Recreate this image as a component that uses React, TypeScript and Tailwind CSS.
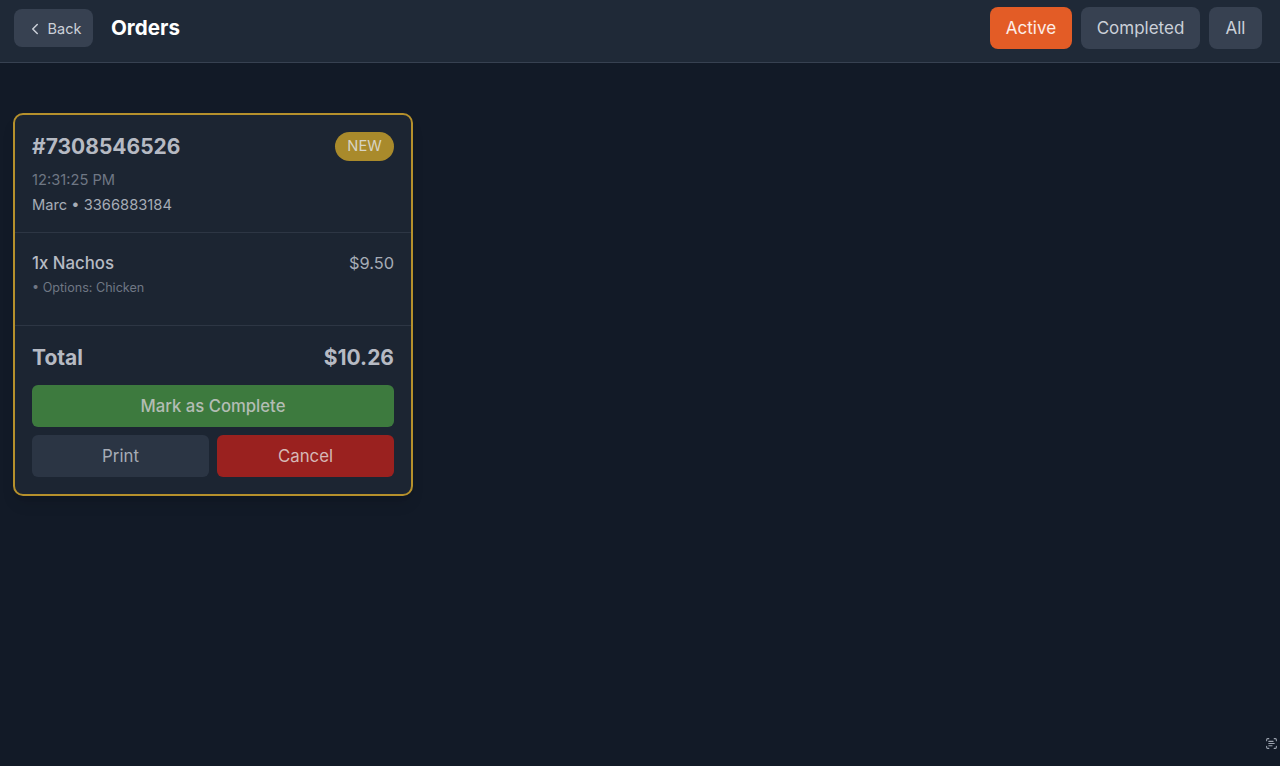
import { ChevronLeft, ScanText } from 'lucide-react'

const font = { fontFamily: 'Inter, "Liberation Sans", sans-serif' }

export default function App() {
  return (
    <div style={font} className="relative min-h-[766px] bg-[#121a27] antialiased">
      <header className="h-[63px] flex items-start justify-between pl-[14px] pr-[18px] pt-[7px] bg-[#1f2937] border-b border-[#374151]">
        <div className="flex items-center gap-[18px] h-[42px]">
          <button className="h-[38px] w-[79px] pt-px flex items-center justify-center gap-1 rounded-lg bg-[#374151] text-[#cbd0d8] text-[14.5px]">
            <ChevronLeft size={18} strokeWidth={2} />
            Back
          </button>
          <h1 className="pt-px text-[20.6px] font-bold text-white">Orders</h1>
        </div>
        <div className="flex items-center gap-[9px]">
          <button className="h-[42px] w-[82px] pt-px rounded-lg bg-[#e35c26] text-white/90 text-[17px]">Active</button>
          <button className="h-[42px] w-[119px] pt-px rounded-lg bg-[#374151] text-[#cbd0d8] text-[17px]">Completed</button>
          <button className="h-[42px] w-[53px] pt-px rounded-lg bg-[#374151] text-[#cbd0d8] text-[17px]">All</button>
        </div>
      </header>

      <main className="pt-[50px] px-[13px]">
        <div className="w-[400px] rounded-[10px] border-2 border-[#b5902c] bg-[#1c2532] shadow-lg">
          <div className="px-[17px] pt-4 pb-[17px] border-b border-[#2d3644]">
            <div className="h-[31px] flex items-center justify-between">
              <span className="text-[21px] font-bold text-[#b6bac3]">#7308546526</span>
              <span className="h-[29px] w-[59px] flex items-center justify-center rounded-full bg-[#a98a2b] text-[14.7px] text-[#d8d4c4]">NEW</span>
            </div>
            <p className="mt-2 text-[14.7px] leading-5 text-[#6f7784]">12:31:25 PM</p>
            <p className="mt-[5px] text-[14.7px] leading-5 text-[#a6acb6]">Marc • 3366883184</p>
          </div>

          <div className="px-[17px] pt-[18px] pb-[29px] border-b border-[#2d3644]">
            <div className="h-6 flex items-baseline justify-between leading-6">
              <span className="text-[16.8px] font-medium text-[#b6bac3]">1x Nachos</span>
              <span className="text-[16.4px] text-[#a6acb6]">$9.50</span>
            </div>
            <p className="mt-[5px] text-[12.6px] leading-4 text-[#6f7784]">• Options: Chicken</p>
          </div>

          <div className="px-[17px] pt-[18px] pb-[17px]">
            <div className="h-7 flex items-center justify-between">
              <span className="text-[21px] font-bold text-[#b6bac3]">Total</span>
              <span className="text-[21px] font-bold text-[#b6bac3]">$10.26</span>
            </div>
            <button className="mt-[13px] w-full h-[42px] pt-px rounded-md bg-[#3d7a3e] text-[16.7px] font-medium text-[#b3bdb4]">
              Mark as Complete
            </button>
            <div className="mt-2 grid grid-cols-2 gap-2">
              <button className="h-[42px] pt-px rounded-md bg-[#2b3544] text-[16.8px] text-[#a6acb6]">Print</button>
              <button className="h-[42px] pt-px rounded-md bg-[#9a211f] text-[16.8px] text-[#d6b8b6]">Cancel</button>
            </div>
          </div>
        </div>
      </main>

      <div className="absolute right-[2px] bottom-[16px] text-[#9ca3af]">
        <ScanText size={13} strokeWidth={2} />
      </div>
    </div>
  )
}
